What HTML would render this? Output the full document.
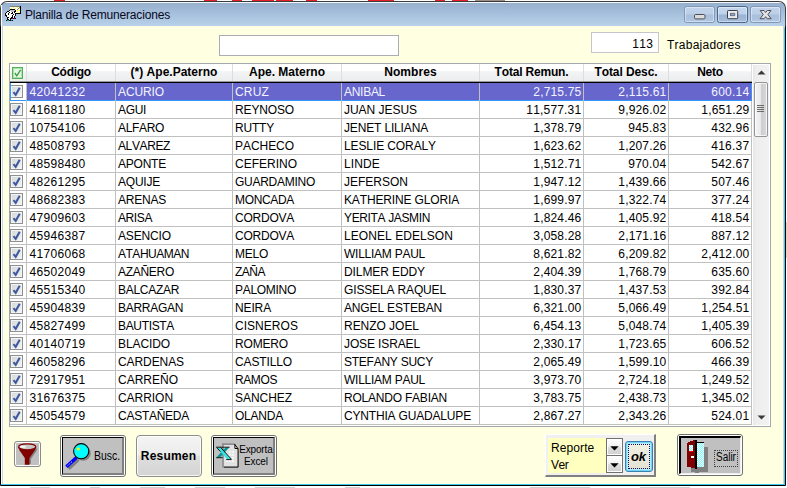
<!DOCTYPE html>
<html><head><meta charset="utf-8"><title>Planilla de Remuneraciones</title>
<style>
html,body{margin:0;padding:0;}
body{width:787px;height:488px;overflow:hidden;position:relative;background:#fff;font-family:"Liberation Sans",sans-serif;font-size:12px;color:#000;font-kerning:none;font-variant-ligatures:none;}
div,span{box-sizing:border-box;}
.abs{position:absolute;}
#win{position:absolute;left:0px;top:1px;width:786px;height:485px;background:linear-gradient(#3a3a3a 0,#4a4a4a 24px,#000 26px,#000 100%);border-radius:7px 7px 1px 1px;}
#frame{position:absolute;left:1px;top:1px;width:784px;height:483px;border-radius:6px 6px 0 0;background:linear-gradient(#f4f8fc 0px,#f4f8fc 1px,#97b0ce 1px,#a7c0dc 12px,#b9d1ea 24px,#c3d7ee 30px,#c3d7ee 100%);}
#glowr{position:absolute;left:783px;top:26px;width:1px;height:457px;background:#3cc8f0;}
#glowb{position:absolute;left:0px;top:482px;width:784px;height:1px;background:#3cc8f0;}
#client{position:absolute;left:2px;top:24px;width:780px;height:458px;background:#ffffe1;}
#title{position:absolute;left:25px;top:8px;font-size:12px;color:#08081e;white-space:nowrap;letter-spacing:-0.17px;}
.capbtn{position:absolute;top:6px;height:17px;width:31px;border:1px solid #8499b8;border-radius:2.5px;background:linear-gradient(#c1d4ea 0,#bbcfe7 48%,#a9c0dd 52%,#b0c6e1 100%);box-shadow:inset 0 0 0 1px rgba(255,255,255,.4);}
.capbtn.mx{border-color:#4d6588;background:linear-gradient(#c6d8ee 0,#bdd1e9 48%,#98b3d4 52%,#a6bedb 100%);}
/* top controls */
#txt{position:absolute;left:219px;top:35px;width:180px;height:21px;background:#fff;border:1px solid #abadb3;}
#cnt{position:absolute;left:591px;top:32px;width:68px;height:21px;background:#fff;border:1px solid #c4c6cc;font-size:12px;letter-spacing:0.33px;text-align:right;padding:4px 4.8px 0 0;}
#trab{position:absolute;left:667px;top:37.5px;font-size:12px;letter-spacing:0.25px;white-space:nowrap;}
/* grid */
#grid{position:absolute;left:9px;top:63px;width:762px;height:364px;background:#fff;border:1px solid #a2a6ae;}
#hdr{position:absolute;left:10px;top:64px;width:742px;height:17px;background:linear-gradient(#ffffff 0,#ffffff 40%,#f2f3f4 45%,#eceded 100%);}
.hc{position:absolute;top:64px;height:17px;text-align:center;font-weight:bold;font-size:12px;line-height:16px;white-space:nowrap;letter-spacing:-0.1px;}
.hs{position:absolute;top:64px;width:1px;height:17px;background:#dcdde0;}
#hline1{position:absolute;left:10px;top:81px;width:742px;height:1px;background:#9a9a9a;}
#hline2{position:absolute;left:10px;top:82px;width:742px;height:1px;background:#000;}
.row{position:absolute;left:10px;width:742px;height:18px;border-bottom:1px solid #c0c0c0;font-size:12px;line-height:19px;white-space:nowrap;}
.row .c{position:absolute;top:0;height:17px;overflow:hidden;}
.row .t{padding-left:2px;}
.row .d{padding-left:2.4px;}
.row .n{text-align:right;padding-right:1.7px;}
.row.sel{border-bottom:1px solid #3399ff;}
.row.sel .c{background:#6666cc;color:#f4f4ff;}
.row.sel::after{content:"";position:absolute;left:741px;top:0;width:1px;height:18px;background:#3399ff;z-index:5;}
.row.sel::before{content:"";position:absolute;left:0;top:0;width:1px;height:18px;background:#3399ff;z-index:5;}
.cb{position:absolute;left:0px;top:2px;width:13px;height:13px;border:1px solid #8e8f8f;background:linear-gradient(135deg,#d4d7da 0,#f4f4f4 100%);box-shadow:inset 0 0 0 1px #f4f4f4;}
.cb svg{position:absolute;left:-1px;top:-1px;}
.vs{position:absolute;top:83px;width:1px;height:342px;background:#c0c0c0;}
</style></head><body>
<div class="abs" style="left:0;top:0;width:787px;height:1px;background:#fff"></div><div class="abs" style="left:54px;top:0;width:11px;height:1px;background:#e8202a"></div><div class="abs" style="left:204px;top:0;width:13px;height:1px;background:#e8202a"></div><div class="abs" style="left:232px;top:0;width:10px;height:1px;background:#e8202a"></div><div class="abs" style="left:252px;top:0;width:22px;height:1px;background:#e8202a"></div><div class="abs" style="left:276px;top:0;width:17px;height:1px;background:#e8202a"></div><div class="abs" style="left:306px;top:0;width:11px;height:1px;background:#e8202a"></div><div class="abs" style="left:368px;top:0;width:26px;height:1px;background:#e8202a"></div><div class="abs" style="left:435px;top:0;width:10px;height:1px;background:#e8202a"></div><div class="abs" style="left:452px;top:0;width:16px;height:1px;background:#e8202a"></div><div class="abs" style="left:475px;top:0;width:30px;height:1px;background:#9a8f88"></div><div class="abs" style="left:30px;top:487px;width:20px;height:1px;background:#cfcfcf"></div><div class="abs" style="left:90px;top:487px;width:10px;height:1px;background:#cfcfcf"></div><div class="abs" style="left:140px;top:487px;width:25px;height:1px;background:#cfcfcf"></div><div class="abs" style="left:195px;top:487px;width:30px;height:1px;background:#cfcfcf"></div><div class="abs" style="left:255px;top:487px;width:40px;height:1px;background:#cfcfcf"></div><div class="abs" style="left:345px;top:487px;width:15px;height:1px;background:#cfcfcf"></div><div class="abs" style="left:530px;top:487px;width:60px;height:1px;background:#cfcfcf"></div><div class="abs" style="left:640px;top:487px;width:50px;height:1px;background:#cfcfcf"></div>
<div class="abs" style="left:786px;top:222px;width:1px;height:36px;background:#f8d0a8"></div>
<div id="win"><div id="frame">
<div id="client"></div>
<div class="abs" style="left:0;top:3px;width:1px;height:479px;background:#fbfdff"></div><div id="glowr"></div><div id="glowb"></div>
</div></div>
<div id="title">Planilla de Remuneraciones</div>
<div class="capbtn" style="left:684px"></div>
<div class="capbtn mx" style="left:717px"></div>
<div class="capbtn" style="left:750px"></div>
<svg class="abs" style="left:693px;top:13px" width="14" height="8" viewBox="0 0 14 8"><rect x="1.5" y="1.5" width="10.5" height="4.4" rx="1.2" fill="#dcdcdc" stroke="#4c4c56" stroke-width="1"/></svg>
<svg class="abs" style="left:726px;top:9px" width="14" height="12" viewBox="0 0 14 12"><path fill-rule="evenodd" d="M2.3 1.5 H10.9 Q11.7 1.5 11.7 2.3 V8.9 Q11.7 9.7 10.9 9.7 H2.3 Q1.5 9.7 1.5 8.9 V2.3 Q1.5 1.5 2.3 1.5 Z M4.5 4.4 V6.6 H8.7 V4.4 Z" fill="#ececec" stroke="#3c3c4a" stroke-width="1"/><rect x="4.5" y="4.4" width="4.2" height="2.2" fill="#8aa4c6"/></svg>
<svg class="abs" style="left:759px;top:9px" width="14" height="12" viewBox="0 0 14 12"><path d="M1.2 1.5 H5 L6.6 3.5 L8.2 1.5 H12 L8.9 5.6 L12.2 9.7 H8.2 L6.6 7.7 L5 9.7 H1 L4.3 5.6 Z" fill="#e4e4e4" stroke="#50505c" stroke-width="1" stroke-linejoin="round"/></svg>
<svg class="abs" style="left:4px;top:5px" width="20" height="18" viewBox="0 0 20 18" shape-rendering="crispEdges" id="ticon"><rect x="6" y="1" width="1" height="1" fill="#808080"/><rect x="7" y="1" width="1" height="1" fill="#808080"/><rect x="8" y="1" width="1" height="1" fill="#808080"/><rect x="9" y="1" width="1" height="1" fill="#808080"/><rect x="10" y="1" width="1" height="1" fill="#808080"/><rect x="11" y="1" width="1" height="1" fill="#808080"/><rect x="12" y="1" width="1" height="1" fill="#808080"/><rect x="13" y="1" width="1" height="1" fill="#808080"/><rect x="14" y="1" width="1" height="1" fill="#808080"/><rect x="15" y="1" width="1" height="1" fill="#808080"/><rect x="16" y="1" width="1" height="1" fill="#000"/><rect x="6" y="2" width="1" height="1" fill="#fff"/><rect x="7" y="2" width="1" height="1" fill="#fff"/><rect x="8" y="2" width="1" height="1" fill="#fff"/><rect x="9" y="2" width="1" height="1" fill="#ffff00"/><rect x="10" y="2" width="1" height="1" fill="#fff"/><rect x="11" y="2" width="1" height="1" fill="#fff"/><rect x="12" y="2" width="1" height="1" fill="#fff"/><rect x="13" y="2" width="1" height="1" fill="#ffff00"/><rect x="14" y="2" width="1" height="1" fill="#fff"/><rect x="15" y="2" width="1" height="1" fill="#808080"/><rect x="16" y="2" width="1" height="1" fill="#000"/><rect x="6" y="3" width="1" height="1" fill="#fff"/><rect x="7" y="3" width="1" height="1" fill="#ffff00"/><rect x="8" y="3" width="1" height="1" fill="#fff"/><rect x="9" y="3" width="1" height="1" fill="#fff"/><rect x="10" y="3" width="1" height="1" fill="#fff"/><rect x="11" y="3" width="1" height="1" fill="#ffff00"/><rect x="12" y="3" width="1" height="1" fill="#fff"/><rect x="13" y="3" width="1" height="1" fill="#fff"/><rect x="14" y="3" width="1" height="1" fill="#808080"/><rect x="15" y="3" width="1" height="1" fill="#ffff00"/><rect x="16" y="3" width="1" height="1" fill="#000"/><rect x="6" y="4" width="1" height="1" fill="#000"/><rect x="7" y="4" width="1" height="1" fill="#000"/><rect x="8" y="4" width="1" height="1" fill="#000"/><rect x="9" y="4" width="1" height="1" fill="#000"/><rect x="10" y="4" width="1" height="1" fill="#000"/><rect x="11" y="4" width="1" height="1" fill="#fff"/><rect x="12" y="4" width="1" height="1" fill="#fff"/><rect x="13" y="4" width="1" height="1" fill="#808080"/><rect x="14" y="4" width="1" height="1" fill="#fff"/><rect x="15" y="4" width="1" height="1" fill="#fff"/><rect x="16" y="4" width="1" height="1" fill="#000"/><rect x="5" y="5" width="1" height="1" fill="#000"/><rect x="6" y="5" width="1" height="1" fill="#c0c0c0"/><rect x="7" y="5" width="1" height="1" fill="#c0c0c0"/><rect x="8" y="5" width="1" height="1" fill="#c0c0c0"/><rect x="9" y="5" width="1" height="1" fill="#c0c0c0"/><rect x="10" y="5" width="1" height="1" fill="#c0c0c0"/><rect x="11" y="5" width="1" height="1" fill="#000"/><rect x="12" y="5" width="1" height="1" fill="#fff"/><rect x="13" y="5" width="1" height="1" fill="#ffff00"/><rect x="14" y="5" width="1" height="1" fill="#fff"/><rect x="15" y="5" width="1" height="1" fill="#ffff00"/><rect x="16" y="5" width="1" height="1" fill="#000"/><rect x="3" y="6" width="1" height="1" fill="#000"/><rect x="4" y="6" width="1" height="1" fill="#000"/><rect x="5" y="6" width="1" height="1" fill="#fff"/><rect x="6" y="6" width="1" height="1" fill="#fff"/><rect x="7" y="6" width="1" height="1" fill="#c0c0c0"/><rect x="8" y="6" width="1" height="1" fill="#c0c0c0"/><rect x="9" y="6" width="1" height="1" fill="#c0c0c0"/><rect x="10" y="6" width="1" height="1" fill="#000"/><rect x="11" y="6" width="1" height="1" fill="#000"/><rect x="12" y="6" width="1" height="1" fill="#fff"/><rect x="13" y="6" width="1" height="1" fill="#ffff00"/><rect x="14" y="6" width="1" height="1" fill="#fff"/><rect x="15" y="6" width="1" height="1" fill="#fff"/><rect x="16" y="6" width="1" height="1" fill="#000"/><rect x="2" y="7" width="1" height="1" fill="#000"/><rect x="3" y="7" width="1" height="1" fill="#fff"/><rect x="4" y="7" width="1" height="1" fill="#fff"/><rect x="5" y="7" width="1" height="1" fill="#000"/><rect x="6" y="7" width="1" height="1" fill="#fff"/><rect x="7" y="7" width="1" height="1" fill="#fff"/><rect x="8" y="7" width="1" height="1" fill="#000"/><rect x="9" y="7" width="1" height="1" fill="#fff"/><rect x="10" y="7" width="1" height="1" fill="#000"/><rect x="11" y="7" width="1" height="1" fill="#fff"/><rect x="12" y="7" width="1" height="1" fill="#fff"/><rect x="13" y="7" width="1" height="1" fill="#fff"/><rect x="14" y="7" width="1" height="1" fill="#fff"/><rect x="15" y="7" width="1" height="1" fill="#ffff00"/><rect x="16" y="7" width="1" height="1" fill="#000"/><rect x="1" y="8" width="1" height="1" fill="#000"/><rect x="2" y="8" width="1" height="1" fill="#fff"/><rect x="3" y="8" width="1" height="1" fill="#fff"/><rect x="4" y="8" width="1" height="1" fill="#000"/><rect x="5" y="8" width="1" height="1" fill="#fff"/><rect x="6" y="8" width="1" height="1" fill="#fff"/><rect x="7" y="8" width="1" height="1" fill="#000"/><rect x="8" y="8" width="1" height="1" fill="#000"/><rect x="9" y="8" width="1" height="1" fill="#fff"/><rect x="10" y="8" width="1" height="1" fill="#fff"/><rect x="11" y="8" width="1" height="1" fill="#000"/><rect x="12" y="8" width="1" height="1" fill="#000"/><rect x="13" y="8" width="1" height="1" fill="#000"/><rect x="14" y="8" width="1" height="1" fill="#000"/><rect x="15" y="8" width="1" height="1" fill="#000"/><rect x="16" y="8" width="1" height="1" fill="#000"/><rect x="1" y="9" width="1" height="1" fill="#000"/><rect x="2" y="9" width="1" height="1" fill="#fff"/><rect x="3" y="9" width="1" height="1" fill="#fff"/><rect x="4" y="9" width="1" height="1" fill="#000"/><rect x="5" y="9" width="1" height="1" fill="#fff"/><rect x="6" y="9" width="1" height="1" fill="#fff"/><rect x="7" y="9" width="1" height="1" fill="#fff"/><rect x="8" y="9" width="1" height="1" fill="#fff"/><rect x="9" y="9" width="1" height="1" fill="#000"/><rect x="10" y="9" width="1" height="1" fill="#fff"/><rect x="11" y="9" width="1" height="1" fill="#000"/><rect x="1" y="10" width="1" height="1" fill="#000"/><rect x="2" y="10" width="1" height="1" fill="#000"/><rect x="3" y="10" width="1" height="1" fill="#fff"/><rect x="4" y="10" width="1" height="1" fill="#fff"/><rect x="5" y="10" width="1" height="1" fill="#fff"/><rect x="6" y="10" width="1" height="1" fill="#fff"/><rect x="7" y="10" width="1" height="1" fill="#fff"/><rect x="8" y="10" width="1" height="1" fill="#000"/><rect x="9" y="10" width="1" height="1" fill="#fff"/><rect x="10" y="10" width="1" height="1" fill="#fff"/><rect x="11" y="10" width="1" height="1" fill="#000"/><rect x="2" y="11" width="1" height="1" fill="#000"/><rect x="3" y="11" width="1" height="1" fill="#fff"/><rect x="4" y="11" width="1" height="1" fill="#fff"/><rect x="5" y="11" width="1" height="1" fill="#fff"/><rect x="6" y="11" width="1" height="1" fill="#fff"/><rect x="7" y="11" width="1" height="1" fill="#fff"/><rect x="8" y="11" width="1" height="1" fill="#000"/><rect x="9" y="11" width="1" height="1" fill="#fff"/><rect x="10" y="11" width="1" height="1" fill="#000"/><rect x="3" y="12" width="1" height="1" fill="#000"/><rect x="4" y="12" width="1" height="1" fill="#000"/><rect x="5" y="12" width="1" height="1" fill="#fff"/><rect x="6" y="12" width="1" height="1" fill="#fff"/><rect x="7" y="12" width="1" height="1" fill="#000"/><rect x="8" y="12" width="1" height="1" fill="#000"/><rect x="9" y="12" width="1" height="1" fill="#fff"/><rect x="10" y="12" width="1" height="1" fill="#000"/><rect x="3" y="13" width="1" height="1" fill="#000"/><rect x="4" y="13" width="1" height="1" fill="#fff"/><rect x="5" y="13" width="1" height="1" fill="#fff"/><rect x="6" y="13" width="1" height="1" fill="#000"/><rect x="7" y="13" width="1" height="1" fill="#000"/><rect x="8" y="13" width="1" height="1" fill="#a000a0"/><rect x="9" y="13" width="1" height="1" fill="#000"/><rect x="10" y="13" width="1" height="1" fill="#a000a0"/><rect x="11" y="13" width="1" height="1" fill="#000"/><rect x="3" y="14" width="1" height="1" fill="#000"/><rect x="4" y="14" width="1" height="1" fill="#000"/><rect x="5" y="14" width="1" height="1" fill="#fff"/><rect x="6" y="14" width="1" height="1" fill="#000"/><rect x="2" y="15" width="1" height="1" fill="#000"/><rect x="3" y="15" width="1" height="1" fill="#00a0a0"/><rect x="4" y="15" width="1" height="1" fill="#00a0a0"/><rect x="5" y="15" width="1" height="1" fill="#000"/><rect x="6" y="15" width="1" height="1" fill="#000"/><rect x="7" y="15" width="1" height="1" fill="#00a0a0"/><rect x="8" y="15" width="1" height="1" fill="#000"/></svg>
<div id="txt"></div>
<div id="cnt">113</div>
<div id="trab">Trabajadores</div>
<div id="grid"></div>
<div id="hdr"></div>
<div class="hc" style="left:27px;width:88px;letter-spacing:-0.3px">Código</div>
<div class="hc" style="left:116px;width:116px;letter-spacing:0.01px">(*) Ape.Paterno</div>
<div class="hc" style="left:233px;width:108px;letter-spacing:0px">Ape. Materno</div>
<div class="hc" style="left:342px;width:137px;letter-spacing:0.1px">Nombres</div>
<div class="hc" style="left:480px;width:103px;letter-spacing:-0.18px">Total Remun.</div>
<div class="hc" style="left:584px;width:84px;letter-spacing:-0.09px">Total Desc.</div>
<div class="hc" style="left:669px;width:82px;letter-spacing:-0.29px">Neto</div>
<div class="hs" style="left:26px"></div><div class="hs" style="left:115px"></div><div class="hs" style="left:232px"></div><div class="hs" style="left:341px"></div><div class="hs" style="left:479px"></div><div class="hs" style="left:583px"></div><div class="hs" style="left:668px"></div><div class="hs" style="left:751px"></div>
<div id="hline1"></div><div id="hline2"></div>

<div class="row sel" style="top:83px">
<span class="cb"><svg width="13" height="13" viewBox="0 0 13 13"><path d="M3.5 7.1 L5.7 9.8 L9.7 2.7" fill="none" stroke="#3f5a9e" stroke-width="2.1" /></svg></span>
<span class="c d" style="left:17px;width:88px;letter-spacing:0.326px">42041232</span>
<span class="c t" style="left:106px;width:116px;letter-spacing:-0.112px">ACURIO</span>
<span class="c t" style="left:223px;width:108px;letter-spacing:0.168px">CRUZ</span>
<span class="c t" style="left:332px;width:137px;letter-spacing:-0.281px">ANIBAL</span>
<span class="c n" style="left:470px;width:103px;letter-spacing:0.161px">2,715.75</span>
<span class="c n" style="left:574px;width:84px;letter-spacing:0.161px">2,115.61</span>
<span class="c n" style="left:659px;width:82px;letter-spacing:0.216px">600.14</span>
</div>
<div class="row" style="top:101px">
<span class="cb"><svg width="13" height="13" viewBox="0 0 13 13"><path d="M3.5 7.1 L5.7 9.8 L9.7 2.7" fill="none" stroke="#3f5a9e" stroke-width="2.1" /></svg></span>
<span class="c d" style="left:17px;width:88px;letter-spacing:0.326px">41681180</span>
<span class="c t" style="left:106px;width:116px;letter-spacing:-0.334px">AGUI</span>
<span class="c t" style="left:223px;width:108px;letter-spacing:-0.145px">REYNOSO</span>
<span class="c t" style="left:332px;width:137px;letter-spacing:-0.035px">JUAN JESUS</span>
<span class="c n" style="left:470px;width:103px;letter-spacing:0.179px">11,577.31</span>
<span class="c n" style="left:574px;width:84px;letter-spacing:0.161px">9,926.02</span>
<span class="c n" style="left:659px;width:82px;letter-spacing:0.161px">1,651.29</span>
</div>
<div class="row" style="top:119px">
<span class="cb"><svg width="13" height="13" viewBox="0 0 13 13"><path d="M3.5 7.1 L5.7 9.8 L9.7 2.7" fill="none" stroke="#3f5a9e" stroke-width="2.1" /></svg></span>
<span class="c d" style="left:17px;width:88px;letter-spacing:0.326px">10754106</span>
<span class="c t" style="left:106px;width:116px;letter-spacing:-0.335px">ALFARO</span>
<span class="c t" style="left:223px;width:108px;letter-spacing:-0.199px">RUTTY</span>
<span class="c t" style="left:332px;width:137px;letter-spacing:-0.156px">JENET LILIANA</span>
<span class="c n" style="left:470px;width:103px;letter-spacing:0.161px">1,378.79</span>
<span class="c n" style="left:574px;width:84px;letter-spacing:0.216px">945.83</span>
<span class="c n" style="left:659px;width:82px;letter-spacing:0.216px">432.96</span>
</div>
<div class="row" style="top:137px">
<span class="cb"><svg width="13" height="13" viewBox="0 0 13 13"><path d="M3.5 7.1 L5.7 9.8 L9.7 2.7" fill="none" stroke="#3f5a9e" stroke-width="2.1" /></svg></span>
<span class="c d" style="left:17px;width:88px;letter-spacing:0.326px">48508793</span>
<span class="c t" style="left:106px;width:116px;letter-spacing:-0.384px">ALVAREZ</span>
<span class="c t" style="left:223px;width:108px;letter-spacing:-0.049px">PACHECO</span>
<span class="c t" style="left:332px;width:137px;letter-spacing:-0.106px">LESLIE CORALY</span>
<span class="c n" style="left:470px;width:103px;letter-spacing:0.161px">1,623.62</span>
<span class="c n" style="left:574px;width:84px;letter-spacing:0.161px">1,207.26</span>
<span class="c n" style="left:659px;width:82px;letter-spacing:0.216px">416.37</span>
</div>
<div class="row" style="top:155px">
<span class="cb"><svg width="13" height="13" viewBox="0 0 13 13"><path d="M3.5 7.1 L5.7 9.8 L9.7 2.7" fill="none" stroke="#3f5a9e" stroke-width="2.1" /></svg></span>
<span class="c d" style="left:17px;width:88px;letter-spacing:0.326px">48598480</span>
<span class="c t" style="left:106px;width:116px;letter-spacing:-0.224px">APONTE</span>
<span class="c t" style="left:223px;width:108px;letter-spacing:-0.000px">CEFERINO</span>
<span class="c t" style="left:332px;width:137px;letter-spacing:0.131px">LINDE</span>
<span class="c n" style="left:470px;width:103px;letter-spacing:0.161px">1,512.71</span>
<span class="c n" style="left:574px;width:84px;letter-spacing:0.216px">970.04</span>
<span class="c n" style="left:659px;width:82px;letter-spacing:0.216px">542.67</span>
</div>
<div class="row" style="top:173px">
<span class="cb"><svg width="13" height="13" viewBox="0 0 13 13"><path d="M3.5 7.1 L5.7 9.8 L9.7 2.7" fill="none" stroke="#3f5a9e" stroke-width="2.1" /></svg></span>
<span class="c d" style="left:17px;width:88px;letter-spacing:0.326px">48261295</span>
<span class="c t" style="left:106px;width:116px;letter-spacing:-0.224px">AQUIJE</span>
<span class="c t" style="left:223px;width:108px;letter-spacing:-0.267px">GUARDAMINO</span>
<span class="c t" style="left:332px;width:137px;letter-spacing:-0.001px">JEFERSON</span>
<span class="c n" style="left:470px;width:103px;letter-spacing:0.161px">1,947.12</span>
<span class="c n" style="left:574px;width:84px;letter-spacing:0.161px">1,439.66</span>
<span class="c n" style="left:659px;width:82px;letter-spacing:0.216px">507.46</span>
</div>
<div class="row" style="top:191px">
<span class="cb"><svg width="13" height="13" viewBox="0 0 13 13"><path d="M3.5 7.1 L5.7 9.8 L9.7 2.7" fill="none" stroke="#3f5a9e" stroke-width="2.1" /></svg></span>
<span class="c d" style="left:17px;width:88px;letter-spacing:0.326px">48682383</span>
<span class="c t" style="left:106px;width:116px;letter-spacing:-0.225px">ARENAS</span>
<span class="c t" style="left:223px;width:108px;letter-spacing:-0.334px">MONCADA</span>
<span class="c t" style="left:332px;width:137px;letter-spacing:-0.147px">KATHERINE GLORIA</span>
<span class="c n" style="left:470px;width:103px;letter-spacing:0.161px">1,699.97</span>
<span class="c n" style="left:574px;width:84px;letter-spacing:0.161px">1,322.74</span>
<span class="c n" style="left:659px;width:82px;letter-spacing:0.216px">377.24</span>
</div>
<div class="row" style="top:209px">
<span class="cb"><svg width="13" height="13" viewBox="0 0 13 13"><path d="M3.5 7.1 L5.7 9.8 L9.7 2.7" fill="none" stroke="#3f5a9e" stroke-width="2.1" /></svg></span>
<span class="c d" style="left:17px;width:88px;letter-spacing:0.326px">47909603</span>
<span class="c t" style="left:106px;width:116px;letter-spacing:-0.402px">ARISA</span>
<span class="c t" style="left:223px;width:108px;letter-spacing:-0.239px">CORDOVA</span>
<span class="c t" style="left:332px;width:137px;letter-spacing:-0.360px">YERITA JASMIN</span>
<span class="c n" style="left:470px;width:103px;letter-spacing:0.161px">1,824.46</span>
<span class="c n" style="left:574px;width:84px;letter-spacing:0.161px">1,405.92</span>
<span class="c n" style="left:659px;width:82px;letter-spacing:0.216px">418.54</span>
</div>
<div class="row" style="top:227px">
<span class="cb"><svg width="13" height="13" viewBox="0 0 13 13"><path d="M3.5 7.1 L5.7 9.8 L9.7 2.7" fill="none" stroke="#3f5a9e" stroke-width="2.1" /></svg></span>
<span class="c d" style="left:17px;width:88px;letter-spacing:0.326px">45946387</span>
<span class="c t" style="left:106px;width:116px;letter-spacing:-0.145px">ASENCIO</span>
<span class="c t" style="left:223px;width:108px;letter-spacing:-0.239px">CORDOVA</span>
<span class="c t" style="left:332px;width:137px;letter-spacing:0.068px">LEONEL EDELSON</span>
<span class="c n" style="left:470px;width:103px;letter-spacing:0.161px">3,058.28</span>
<span class="c n" style="left:574px;width:84px;letter-spacing:0.161px">2,171.16</span>
<span class="c n" style="left:659px;width:82px;letter-spacing:0.216px">887.12</span>
</div>
<div class="row" style="top:245px">
<span class="cb"><svg width="13" height="13" viewBox="0 0 13 13"><path d="M3.5 7.1 L5.7 9.8 L9.7 2.7" fill="none" stroke="#3f5a9e" stroke-width="2.1" /></svg></span>
<span class="c d" style="left:17px;width:88px;letter-spacing:0.326px">41706068</span>
<span class="c t" style="left:106px;width:116px;letter-spacing:-0.482px">ATAHUAMAN</span>
<span class="c t" style="left:223px;width:108px;letter-spacing:-0.252px">MELO</span>
<span class="c t" style="left:332px;width:137px;letter-spacing:-0.252px">WILLIAM PAUL</span>
<span class="c n" style="left:470px;width:103px;letter-spacing:0.161px">8,621.82</span>
<span class="c n" style="left:574px;width:84px;letter-spacing:0.161px">6,209.82</span>
<span class="c n" style="left:659px;width:82px;letter-spacing:0.161px">2,412.00</span>
</div>
<div class="row" style="top:263px">
<span class="cb"><svg width="13" height="13" viewBox="0 0 13 13"><path d="M3.5 7.1 L5.7 9.8 L9.7 2.7" fill="none" stroke="#3f5a9e" stroke-width="2.1" /></svg></span>
<span class="c d" style="left:17px;width:88px;letter-spacing:0.326px">46502049</span>
<span class="c t" style="left:106px;width:116px;letter-spacing:-0.287px">AZAÑERO</span>
<span class="c t" style="left:223px;width:108px;letter-spacing:-0.501px">ZAÑA</span>
<span class="c t" style="left:332px;width:137px;letter-spacing:-0.092px">DILMER EDDY</span>
<span class="c n" style="left:470px;width:103px;letter-spacing:0.161px">2,404.39</span>
<span class="c n" style="left:574px;width:84px;letter-spacing:0.161px">1,768.79</span>
<span class="c n" style="left:659px;width:82px;letter-spacing:0.216px">635.60</span>
</div>
<div class="row" style="top:281px">
<span class="cb"><svg width="13" height="13" viewBox="0 0 13 13"><path d="M3.5 7.1 L5.7 9.8 L9.7 2.7" fill="none" stroke="#3f5a9e" stroke-width="2.1" /></svg></span>
<span class="c d" style="left:17px;width:88px;letter-spacing:0.326px">45515340</span>
<span class="c t" style="left:106px;width:116px;letter-spacing:-0.294px">BALCAZAR</span>
<span class="c t" style="left:223px;width:108px;letter-spacing:-0.293px">PALOMINO</span>
<span class="c t" style="left:332px;width:137px;letter-spacing:-0.146px">GISSELA RAQUEL</span>
<span class="c n" style="left:470px;width:103px;letter-spacing:0.161px">1,830.37</span>
<span class="c n" style="left:574px;width:84px;letter-spacing:0.161px">1,437.53</span>
<span class="c n" style="left:659px;width:82px;letter-spacing:0.216px">392.84</span>
</div>
<div class="row" style="top:299px">
<span class="cb"><svg width="13" height="13" viewBox="0 0 13 13"><path d="M3.5 7.1 L5.7 9.8 L9.7 2.7" fill="none" stroke="#3f5a9e" stroke-width="2.1" /></svg></span>
<span class="c d" style="left:17px;width:88px;letter-spacing:0.326px">45904839</span>
<span class="c t" style="left:106px;width:116px;letter-spacing:-0.293px">BARRAGAN</span>
<span class="c t" style="left:223px;width:108px;letter-spacing:-0.135px">NEIRA</span>
<span class="c t" style="left:332px;width:137px;letter-spacing:-0.156px">ANGEL ESTEBAN</span>
<span class="c n" style="left:470px;width:103px;letter-spacing:0.161px">6,321.00</span>
<span class="c n" style="left:574px;width:84px;letter-spacing:0.161px">5,066.49</span>
<span class="c n" style="left:659px;width:82px;letter-spacing:0.161px">1,254.51</span>
</div>
<div class="row" style="top:317px">
<span class="cb"><svg width="13" height="13" viewBox="0 0 13 13"><path d="M3.5 7.1 L5.7 9.8 L9.7 2.7" fill="none" stroke="#3f5a9e" stroke-width="2.1" /></svg></span>
<span class="c d" style="left:17px;width:88px;letter-spacing:0.326px">45827499</span>
<span class="c t" style="left:106px;width:116px;letter-spacing:-0.334px">BAUTISTA</span>
<span class="c t" style="left:223px;width:108px;letter-spacing:0.040px">CISNEROS</span>
<span class="c t" style="left:332px;width:137px;letter-spacing:-0.035px">RENZO JOEL</span>
<span class="c n" style="left:470px;width:103px;letter-spacing:0.161px">6,454.13</span>
<span class="c n" style="left:574px;width:84px;letter-spacing:0.161px">5,048.74</span>
<span class="c n" style="left:659px;width:82px;letter-spacing:0.161px">1,405.39</span>
</div>
<div class="row" style="top:335px">
<span class="cb"><svg width="13" height="13" viewBox="0 0 13 13"><path d="M3.5 7.1 L5.7 9.8 L9.7 2.7" fill="none" stroke="#3f5a9e" stroke-width="2.1" /></svg></span>
<span class="c d" style="left:17px;width:88px;letter-spacing:0.326px">40140719</span>
<span class="c t" style="left:106px;width:116px;letter-spacing:-0.097px">BLACIDO</span>
<span class="c t" style="left:223px;width:108px;letter-spacing:-0.167px">ROMERO</span>
<span class="c t" style="left:332px;width:137px;letter-spacing:-0.124px">JOSE ISRAEL</span>
<span class="c n" style="left:470px;width:103px;letter-spacing:0.161px">2,330.17</span>
<span class="c n" style="left:574px;width:84px;letter-spacing:0.161px">1,723.65</span>
<span class="c n" style="left:659px;width:82px;letter-spacing:0.216px">606.52</span>
</div>
<div class="row" style="top:353px">
<span class="cb"><svg width="13" height="13" viewBox="0 0 13 13"><path d="M3.5 7.1 L5.7 9.8 L9.7 2.7" fill="none" stroke="#3f5a9e" stroke-width="2.1" /></svg></span>
<span class="c d" style="left:17px;width:88px;letter-spacing:0.326px">46058296</span>
<span class="c t" style="left:106px;width:116px;letter-spacing:-0.085px">CARDENAS</span>
<span class="c t" style="left:223px;width:108px;letter-spacing:-0.127px">CASTILLO</span>
<span class="c t" style="left:332px;width:137px;letter-spacing:-0.251px">STEFANY SUCY</span>
<span class="c n" style="left:470px;width:103px;letter-spacing:0.161px">2,065.49</span>
<span class="c n" style="left:574px;width:84px;letter-spacing:0.161px">1,599.10</span>
<span class="c n" style="left:659px;width:82px;letter-spacing:0.216px">466.39</span>
</div>
<div class="row" style="top:371px">
<span class="cb"><svg width="13" height="13" viewBox="0 0 13 13"><path d="M3.5 7.1 L5.7 9.8 L9.7 2.7" fill="none" stroke="#3f5a9e" stroke-width="2.1" /></svg></span>
<span class="c d" style="left:17px;width:88px;letter-spacing:0.326px">72917951</span>
<span class="c t" style="left:106px;width:116px;letter-spacing:-0.001px">CARREÑO</span>
<span class="c t" style="left:223px;width:108px;letter-spacing:-0.401px">RAMOS</span>
<span class="c t" style="left:332px;width:137px;letter-spacing:-0.252px">WILLIAM PAUL</span>
<span class="c n" style="left:470px;width:103px;letter-spacing:0.161px">3,973.70</span>
<span class="c n" style="left:574px;width:84px;letter-spacing:0.161px">2,724.18</span>
<span class="c n" style="left:659px;width:82px;letter-spacing:0.161px">1,249.52</span>
</div>
<div class="row" style="top:389px">
<span class="cb"><svg width="13" height="13" viewBox="0 0 13 13"><path d="M3.5 7.1 L5.7 9.8 L9.7 2.7" fill="none" stroke="#3f5a9e" stroke-width="2.1" /></svg></span>
<span class="c d" style="left:17px;width:88px;letter-spacing:0.326px">31676375</span>
<span class="c t" style="left:106px;width:116px;letter-spacing:-0.048px">CARRION</span>
<span class="c t" style="left:223px;width:108px;letter-spacing:-0.049px">SANCHEZ</span>
<span class="c t" style="left:332px;width:137px;letter-spacing:-0.216px">ROLANDO FABIAN</span>
<span class="c n" style="left:470px;width:103px;letter-spacing:0.161px">3,783.75</span>
<span class="c n" style="left:574px;width:84px;letter-spacing:0.161px">2,438.73</span>
<span class="c n" style="left:659px;width:82px;letter-spacing:0.161px">1,345.02</span>
</div>
<div class="row" style="top:407px">
<span class="cb"><svg width="13" height="13" viewBox="0 0 13 13"><path d="M3.5 7.1 L5.7 9.8 L9.7 2.7" fill="none" stroke="#3f5a9e" stroke-width="2.1" /></svg></span>
<span class="c d" style="left:17px;width:88px;letter-spacing:0.326px">45054579</span>
<span class="c t" style="left:106px;width:116px;letter-spacing:-0.261px">CASTAÑEDA</span>
<span class="c t" style="left:223px;width:108px;letter-spacing:-0.225px">OLANDA</span>
<span class="c t" style="left:332px;width:137px;letter-spacing:-0.178px">CYNTHIA GUADALUPE</span>
<span class="c n" style="left:470px;width:103px;letter-spacing:0.161px">2,867.27</span>
<span class="c n" style="left:574px;width:84px;letter-spacing:0.161px">2,343.26</span>
<span class="c n" style="left:659px;width:82px;letter-spacing:0.216px">524.01</span>
</div>
<div class="vs" style="left:26px"></div>
<div class="vs" style="left:115px"></div>
<div class="vs" style="left:232px"></div>
<div class="vs" style="left:341px"></div>
<div class="vs" style="left:479px"></div>
<div class="vs" style="left:583px"></div>
<div class="vs" style="left:668px"></div>
<div class="vs" style="left:751px"></div>
<!-- header checkbox -->
<div class="abs" style="left:12px;top:67px;width:11px;height:12px;border:1px solid #52b256;background:#e6f7e6;box-shadow:inset 0 0 0 1px #aee0ae;"><svg style="position:absolute;left:-1px;top:-1px" width="11" height="12" viewBox="0 0 11 12"><path d="M2.8 6 L4.8 8.8 L8.6 2.8" fill="none" stroke="#3a9a3e" stroke-width="1.3"/></svg></div>
<!-- scrollbar -->
<div class="abs" style="left:752px;top:64px;width:18px;height:362px;background:#fff;"></div>
<div class="abs" style="left:753px;top:65px;width:16px;height:360px;background:linear-gradient(90deg,#e6e6e6 0,#eeeeee 3px,#f1f1f1 100%);"></div>
<svg class="abs" style="left:757px;top:70px" width="9" height="5" viewBox="0 0 9 5"><path d="M0.5 4.5 L4.5 0.5 L8.5 4.5 Z" fill="#3a3a3a"/></svg>
<svg class="abs" style="left:757px;top:415px" width="9" height="5" viewBox="0 0 9 5"><path d="M0.5 0.5 L4.5 4.5 L8.5 0.5 Z" fill="#3a3a3a"/></svg>
<div class="abs" style="left:754px;top:82px;width:14px;height:55px;border:1px solid #959595;border-radius:2px;background:linear-gradient(90deg,#f5f5f5 0,#eaeaec 45%,#cdcdcf 55%,#d9d9db 100%);box-shadow:inset 0 0 0 1px rgba(255,255,255,.7);"></div>
<div class="abs" style="left:757px;top:105px;width:7px;height:1px;background:#6a6a6a;box-shadow:0 2px 0 #6a6a6a,0 4px 0 #6a6a6a,0 6px 0 #6a6a6a;"></div>

<!-- filter button -->
<div class="abs" style="left:14px;top:441px;width:27px;height:26px;border:1px solid #8a8a8a;border-radius:3px;background:#c0c0c0;box-shadow:inset 0 0 0 1px #fff;"></div>
<svg class="abs" style="left:17px;top:443px" width="21" height="23" viewBox="0 0 21 23">
<path d="M3 5.5 L4.2 8.5 L9.3 16 L9.3 21 L13.9 21 L13.9 16 L19.2 8.5 L20.5 5.5 Z" fill="#808080"/>
<path d="M1 4 L2.6 7.5 L7.8 15 L7.8 21.8 L12.4 21.8 L12.4 15 L17.7 7.5 L19.5 4 Z" fill="#800000"/>
<ellipse cx="10.2" cy="3.8" rx="8.6" ry="3" fill="#c8c8c8" stroke="#800000" stroke-width="1.2"/>
<ellipse cx="6" cy="3.8" rx="3" ry="1.2" fill="#f4f4f4"/>
</svg>

<!-- Busc button -->
<div class="btn3d" style="left:60px;top:435px;width:66px;height:42px"><div class="in"></div></div>
<svg class="abs" style="left:64px;top:440.5px" width="30" height="30" viewBox="0 0 30 30">
<line x1="14.5" y1="18.5" x2="4.6" y2="27.8" stroke="#808080" stroke-width="3.4"/>
<circle cx="19.2" cy="12.2" r="7.6" fill="#808080"/>
<line x1="12.5" y1="16.5" x2="2.4" y2="25.8" stroke="#0000ff" stroke-width="3.4"/>
<line x1="8" y1="20.6" x2="3.2" y2="25" stroke="#fff" stroke-width="1" stroke-dasharray="1.2 1.2"/>
<circle cx="17.2" cy="10.2" r="7.6" fill="#00ffff" stroke="#000" stroke-width="1.1"/>
<circle cx="14.2" cy="8" r="1.6" fill="#ffff00"/>
</svg>
<div class="abs" style="left:93.5px;top:448.7px;font-size:12px;transform:scaleX(0.87);transform-origin:0 0;white-space:nowrap;">Busc.</div>

<!-- Resumen -->
<div class="abs" style="left:136px;top:435px;width:66px;height:42px;border:1px solid #8e8e8e;border-radius:4px;background:linear-gradient(#f4f4f4 0,#ececec 48%,#dedede 52%,#d4d4d4 100%);box-shadow:inset 0 0 0 1px rgba(255,255,255,.8);font-weight:bold;font-size:12px;text-align:center;line-height:41px;letter-spacing:0.2px;padding-right:1px;">Resumen</div>

<!-- Exporta Excel -->
<div class="btn3d" style="left:211px;top:435px;width:66px;height:42px"><div class="in"></div></div>
<svg class="abs" style="left:215px;top:442px" width="26" height="28" viewBox="0 0 26 28">
<rect x="7.2" y="1.3" width="1.7" height="24.2" fill="#8c8c8c"/><rect x="7.2" y="1.3" width="12.6" height="1.7" fill="#8c8c8c"/>
<path d="M8.9 3 L19.6 3 L22.6 6.8 L22.6 24.6 L8.9 24.6 Z" fill="#e2e2e2"/>
<g fill="#f8f8f8"><rect x="13.7" y="9.1" width="2" height="1.7"/><rect x="16.7" y="9.1" width="2.2" height="1.7"/><rect x="13.7" y="12.1" width="2" height="1.7"/><rect x="16.7" y="12.1" width="2.2" height="1.7"/><rect x="13.7" y="15.2" width="2" height="1.7"/><rect x="16.7" y="15.2" width="2.2" height="1.7"/><rect x="11.1" y="18.2" width="2" height="1.8"/><rect x="13.7" y="18.2" width="2" height="1.8"/><rect x="16.7" y="18.2" width="2.2" height="1.8"/></g>
<path d="M19.6 3 L19.6 6.8 L22.6 6.8 Z" fill="#fff"/>
<path d="M19.9 2.2 L19.9 6.5 L23 6.5 M19.9 2.6 L23.1 6.8 L23.1 25.1 L8.9 25.1" fill="none" stroke="#000" stroke-width="1"/>
<path d="M10.5 5.6 L14.2 5.6 L5.2 15.3 L1.6 15.3 Z" fill="#009494"/>
<path d="M1.6 5.6 L5.4 5.6 L16 17.2 L12.2 17.2 Z" fill="#36e4e4"/>
<path d="M1.2 5.2 L14.6 5.2 M1.2 15.7 L7.6 15.7 M11.2 17.6 L16.6 17.6 M5.6 5.4 L16.2 17 M1.8 5.6 L5.4 9.6" fill="none" stroke="#000" stroke-width="0.9"/>
</svg>
<div class="abs" style="left:237.4px;top:444px;width:37px;font-size:10px;line-height:11.6px;text-align:center;letter-spacing:-0.15px;white-space:nowrap;">Exporta<br>Excel</div>

<!-- Reporte panel -->
<div class="abs" style="left:545px;top:434px;width:111px;height:43px;background:#f0f0f0;border-top:1px solid #fff;border-left:1px solid #fff;border-right:2px solid #808080;border-bottom:2px solid #808080;"></div>
<div class="abs" style="left:548px;top:438px;width:58px;height:35px;background:#ffffc0;font-size:12px;line-height:17px;padding:2px 0 0 3px;letter-spacing:0.1px;white-space:nowrap;">Reporte<br><span style="letter-spacing:-0.5px">Ver</span></div>
<div class="dd" style="left:606px;top:438px"></div>
<div class="dd" style="left:606px;top:455px"></div>
<svg class="abs" style="left:610px;top:446px" width="9" height="5" viewBox="0 0 9 5"><path d="M0.3 0.2 L8.7 0.2 L4.5 4.6 Z" fill="#000"/></svg>
<svg class="abs" style="left:610px;top:463px" width="9" height="5" viewBox="0 0 9 5"><path d="M0.3 0.2 L8.7 0.2 L4.5 4.6 Z" fill="#000"/></svg>
<!-- ok -->
<div class="abs" style="left:625px;top:441px;width:28px;height:31px;border:1px solid #3c7fb1;border-radius:3px;background:linear-gradient(#f0f0e4 0,#ecebdc 50%,#e2e1d0 100%);box-shadow:inset 0 0 0 1px #6fd6f5, inset 0 0 0 2px #b4eafa;"></div>
<div class="abs" style="left:628px;top:444px;width:22px;height:25px;border:1px dotted #101060;"></div>
<div class="abs" style="left:624.5px;top:449px;width:28px;text-align:center;font-size:13px;font-weight:bold;font-style:italic;white-space:nowrap;">ok</div>

<!-- Salir -->
<div class="btn3d" style="left:677px;top:434px;width:66px;height:42px"><div class="in" style="border-top:2px solid #000;border-left:2px solid #000;border-right:1px solid #f0f0f0;border-bottom:1px solid #f0f0f0;"></div></div>
<svg class="abs" style="left:685px;top:439px" width="26" height="34" viewBox="0 0 26 34" shape-rendering="crispEdges">
<path d="M6 8 L23 8 L23 32.5 L14 32.5 L14 34 L10 34 L10 32.5 L6 32.5 Z" fill="#808080"/>
<rect x="11.5" y="4" width="7" height="23.5" fill="#7ff" />
<rect x="11.5" y="4" width="7" height="23.5" fill="url(#dith)" />
<path d="M11 3.5 L18.5 3.5" stroke="#000" stroke-width="1"/>
<path d="M1.5 4 L9.5 1 L9.5 29.5 L1.5 27.5 Z" fill="#800000"/>
<rect x="9.5" y="1" width="2" height="28.5" fill="#000"/>
<rect x="3.5" y="5.5" width="4.5" height="7" fill="#7ff"/><rect x="3.5" y="5.5" width="4.5" height="7" fill="url(#dith)"/>
<rect x="3.5" y="12.3" width="4.5" height="1" fill="#ff0000"/>
<rect x="6.2" y="16.5" width="3" height="2" fill="#fff"/>
<defs><pattern id="dith" width="2" height="2" patternUnits="userSpaceOnUse"><rect width="1" height="1" fill="#fff"/><rect x="1" y="1" width="1" height="1" fill="#fff"/></pattern></defs>
</svg>
<div class="abs" style="left:714px;top:450px;width:24px;height:17px;border:1px dotted #404040;"></div>
<div class="abs" style="left:715.8px;top:450px;font-size:12px;transform:scaleX(0.83);transform-origin:0 0;white-space:nowrap;">Salir</div>
<style>
.btn3d{position:absolute;border:1px solid #707070;border-radius:3px;background:#fff;}
.btn3d .in{position:absolute;left:1px;top:1px;right:1px;bottom:1px;background:#c0c0c0;border-top:1px solid #000;border-left:1px solid #000;border-right:2px solid #808080;border-bottom:2px solid #808080;}
.dd{position:absolute;width:17px;height:18px;border:1px solid #707070;background:linear-gradient(#ffffff 0,#f2f2f2 45%,#dcdcdc 55%,#d0d0d0 100%);box-shadow:inset 0 0 0 1px #fff;}
</style>
</body></html>
